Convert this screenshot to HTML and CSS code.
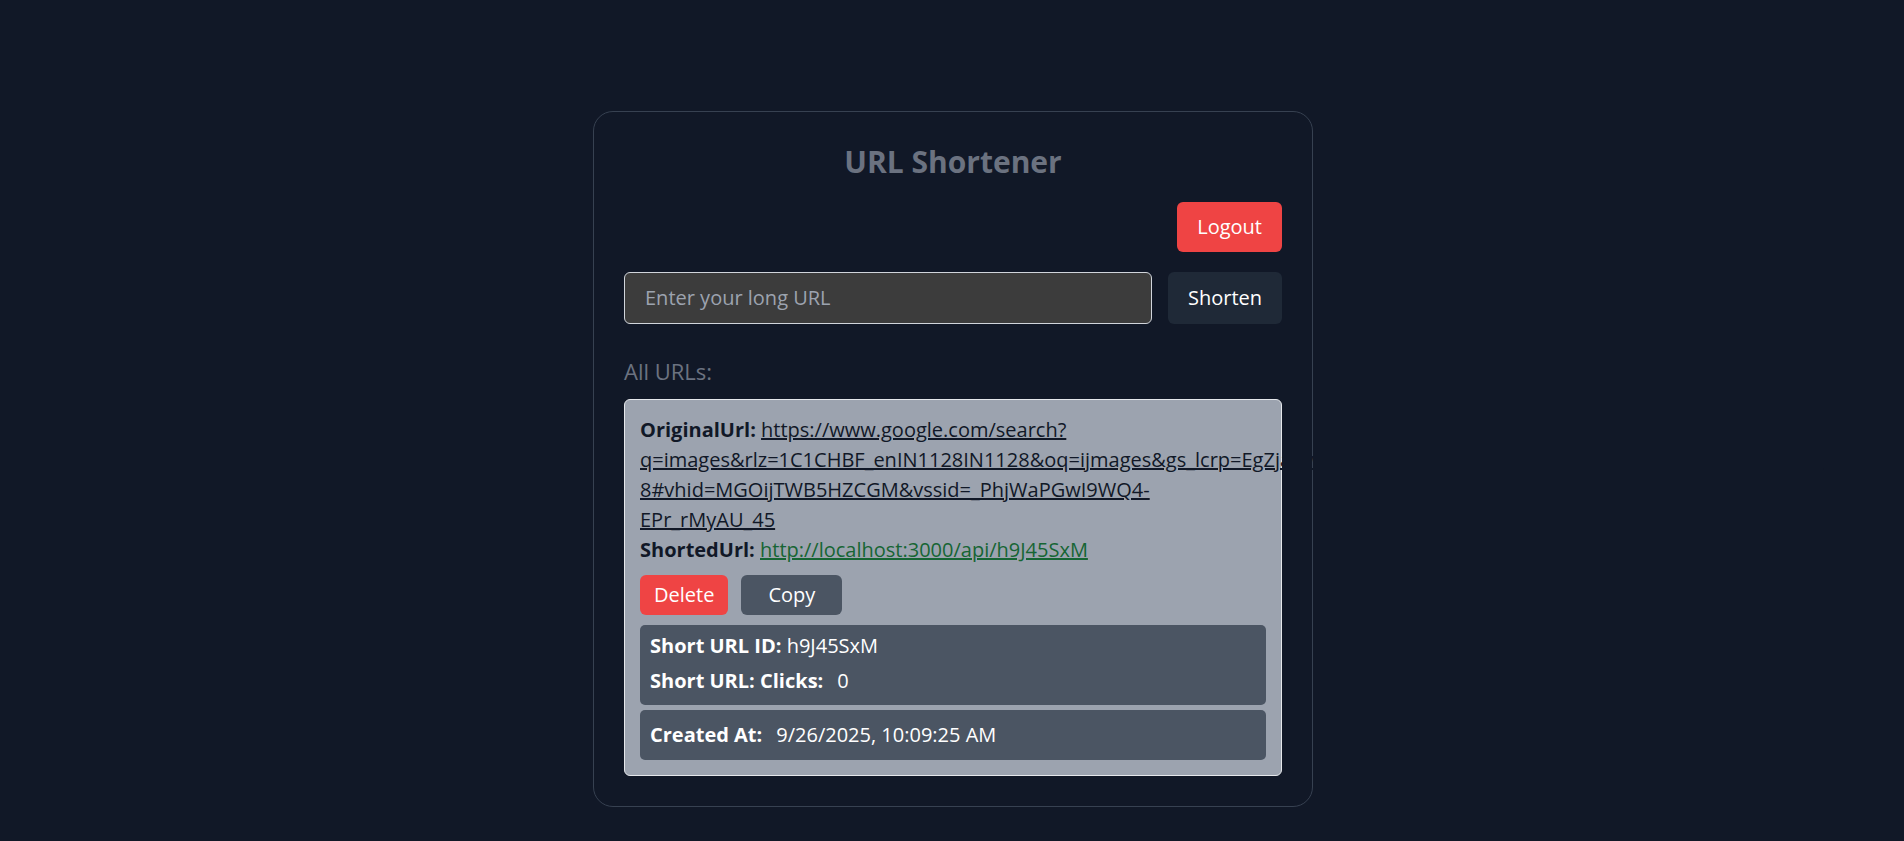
FILE: index.html
```html
<!DOCTYPE html>
<html lang="en">
<head>
<meta charset="utf-8">
<title>URL Shortener</title>
<link rel="stylesheet" href="styles.css">
</head>
<body>
<main class="page">
  <section class="panel">
    <h1 class="title">URL Shortener</h1>
    <div class="toolbar">
      <button class="btn btn-red">Logout</button>
    </div>
    <form class="shorten-form">
      <input class="url-input" type="text" placeholder="Enter your long URL">
      <button type="button" class="btn btn-dark">Shorten</button>
    </form>
    <h2 class="list-title">All URLs:</h2>
    <article class="url-card">
      <p class="line"><b>OriginalUrl:</b> <a class="orig-link" href="#">https://www.google.com/search?<br>q=images&amp;rlz=1C1CHBF_enIN1128IN1128&amp;oq=ijmages&amp;gs_lcrp=EgZjaHJvbWUyBggAEEUYOTIJCAEQ&amp;sourceid=chrome&amp;ie=UTF-<br>8#vhid=MGOijTWB5HZCGM&amp;vssid=_PhjWaPGwI9WQ4-<br>EPr_rMyAU_45</a></p>
      <p class="line"><b>ShortedUrl:</b> <a class="short-link" href="#">http://localhost:3000/api/h9J45SxM</a></p>
      <div class="actions">
        <button class="btn btn-red btn-sm">Delete</button>
        <button class="btn btn-gray btn-copy">Copy</button>
      </div>
      <div class="info info-first">
        <p class="line"><b>Short URL ID:</b> h9J45SxM</p>
        <p class="line"><b>Short URL: Clicks:</b><span class="val">0</span></p>
      </div>
      <div class="info info-second">
        <p class="line"><b>Created At:</b><span class="val">9/26/2025, 10:09:25 AM</span></p>
      </div>
    </article>
  </section>
</main>
</body>
</html>
```

FILE: styles.css
```css
* { box-sizing: border-box; }

html, body {
  margin: 0;
  padding: 0;
  background: #111827;
  overflow-x: hidden;
}

body {
  font-family: "Open Sans", "Noto Sans", "Liberation Sans", sans-serif;
  font-size: 20px;
  line-height: 30px;
  color: #111827;
  min-height: 100vh;
}

.page {
  padding-top: 111px;
  padding-left: 2px;
  display: flex;
  justify-content: center;
}

.panel {
  width: 720px;
  border: 1px solid #374151;
  border-radius: 20px;
  padding: 30px;
  background: #111827;
}

.title {
  margin: 0 0 20px;
  text-align: center;
  font-size: 30px;
  line-height: 40px;
  font-weight: 700;
  color: #6b7280;
}

.toolbar {
  display: flex;
  justify-content: flex-end;
  margin-bottom: 20px;
}

.btn {
  font-family: inherit;
  font-size: 20px;
  line-height: 30px;
  border: 0;
  border-radius: 6px;
  padding: 10px 20px;
  color: #ffffff;
  cursor: pointer;
}

.btn-red { background: #ef4444; }
.btn-dark { background: #1f2937; }
.btn-gray { background: #4b5563; }

.btn-sm { padding: 5px 14px; }
.btn-copy { padding: 5px 27px; }

.shorten-form {
  display: flex;
  gap: 16px;
  margin: 0;
}

.url-input {
  flex: 1;
  min-width: 0;
  font-family: inherit;
  font-size: 20px;
  line-height: 30px;
  padding: 10px 20px;
  background: #3c3c3c;
  color: #ffffff;
  border: 1px solid #d1d5db;
  border-radius: 6px;
  outline: none;
}

.url-input::placeholder { color: #9ca3af; }

.list-title {
  margin: 30px 0 10px;
  font-size: 22px;
  line-height: 35px;
  font-weight: 400;
  color: #6b7280;
}

.url-card {
  background: #9ca3af;
  border: 1px solid #e5e7eb;
  border-radius: 6px;
  padding: 15px;
}

.line {
  margin: 0;
  white-space: nowrap;
}

.line b { font-weight: 700; }

.orig-link {
  color: #111827;
  text-decoration: underline;
}

.short-link {
  color: #166534;
  text-decoration: underline;
}

.actions {
  display: flex;
  gap: 13px;
  margin-top: 10px;
}

.info {
  margin-top: 10px;
  background: #4b5563;
  border-radius: 5px;
  padding: 10px;
  color: #ffffff;
}

.info-first {
  display: flex;
  flex-direction: column;
  gap: 5px;
  padding: 6px 10px 9px;
}

.info-second { margin-top: 5px; }

.val { margin-left: 14px; }
```
